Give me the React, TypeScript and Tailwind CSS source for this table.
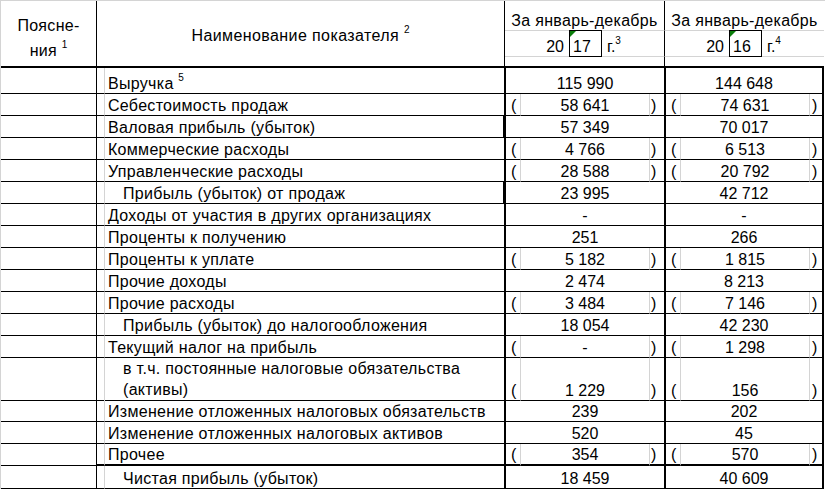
import React from "react";

const COLS = "grid grid-cols-[96px_8px_400px_16px_129px_15px_16px_129px_14px]";

type Row = {
  name: React.ReactNode;
  y17: string;
  y16: string;
  h: string;
  paren?: boolean;
  indent?: boolean;
  total?: boolean;
  thick?: boolean;
  wrap?: boolean;
};

function Sup({ children }: { children: React.ReactNode }) {
  return <sup className="text-[10px] -top-[8px] tracking-normal">{children}</sup>;
}

const rows: Row[] = [
  { name: <>Выручка <Sup>5</Sup></>, y17: "115 990", y16: "144 648", h: "h-[26px]" },
  { name: "Себестоимость продаж", y17: "58 641", y16: "74 631", h: "h-[22px]", paren: true },
  { name: "Валовая прибыль (убыток)", y17: "57 349", y16: "70 017", h: "h-[22px]", total: true },
  { name: "Коммерческие расходы", y17: "4 766", y16: "6 513", h: "h-[22px]", paren: true },
  { name: "Управленческие расходы", y17: "28 588", y16: "20 792", h: "h-[22px]", paren: true },
  { name: "Прибыль (убыток) от продаж", y17: "23 995", y16: "42 712", h: "h-[22px]", indent: true, total: true },
  { name: "Доходы от участия в других организациях", y17: "-", y16: "-", h: "h-[22px]" },
  { name: "Проценты к получению", y17: "251", y16: "266", h: "h-[22px]" },
  { name: "Проценты к уплате", y17: "5 182", y16: "1 815", h: "h-[22px]", paren: true },
  { name: "Прочие доходы", y17: "2 474", y16: "8 213", h: "h-[22px]" },
  { name: "Прочие расходы", y17: "3 484", y16: "7 146", h: "h-[22px]", paren: true },
  { name: "Прибыль (убыток) до налогообложения", y17: "18 054", y16: "42 230", h: "h-[22px]", indent: true },
  { name: "Текущий налог на прибыль", y17: "-", y16: "1 298", h: "h-[22px]", paren: true },
  {
    name: <>в т.ч. постоянные налоговые обязательства<br />(активы)</>,
    y17: "1 229",
    y16: "156",
    h: "h-[42px]",
    paren: true,
    indent: true,
    wrap: true,
  },
  { name: "Изменение отложенных налоговых обязательств", y17: "239", y16: "202", h: "h-[22px]" },
  { name: "Изменение отложенных налоговых активов", y17: "520", y16: "45", h: "h-[22px]" },
  { name: "Прочее", y17: "354", y16: "570", h: "h-[22px]", paren: true, thick: true },
  { name: "Чистая прибыль (убыток)", y17: "18 459", y16: "40 609", h: "h-[23px]", indent: true },
];

const txt = "flex items-end leading-[18px] pb-[0.5px] whitespace-nowrap tracking-normal";

function Values({ v, paren, bb, right }: { v: string; paren?: boolean; bb: string; right?: boolean }) {
  const outer = right ? "border-r-2" : "border-r";
  if (!paren) {
    return <div className={`col-span-3 border-l ${outer} ${bb} ${txt} justify-center`}>{v}</div>;
  }
  return (
    <>
      <div className={`border-l border-r border-r-[#d4d4d4] ${bb} ${txt} pl-[5px]`}>(</div>
      <div className={`border-r border-r-[#d4d4d4] ${bb} ${txt} justify-center`}>{v}</div>
      <div className={`${outer} ${bb} ${txt} ${right ? "pl-[2px]" : "pl-[1px]"}`}>)</div>
    </>
  );
}

function DataRow({ r }: { r: Row }) {
  const bb = r.thick ? "border-b-2" : "border-b";
  return (
    <div className={`${COLS} ${r.h}`}>
      <div className="border-r border-b" />
      <div className={`border-r border-r-[#d4d4d4] ${bb}`} />
      <div
        className={`${r.total ? "border-r-2" : "border-r"} ${bb} flex items-end whitespace-nowrap tracking-[0.3px] ${
          r.wrap ? "leading-[21px] pb-0" : "leading-[18px] pb-[0.5px]"
        } ${r.indent ? "pl-[18px]" : "pl-[3px]"}`}
      >
        <div>{r.name}</div>
      </div>
      <Values v={r.y17} paren={r.paren} bb={bb} />
      <Values v={r.y16} paren={r.paren} bb={bb} right />
    </div>
  );
}

function YearCell({ year, note, last }: { year: string; note: string; last?: boolean }) {
  return (
    <div className={`col-span-3 ${last ? "" : "border-r"} border-b border-b-[#d4d4d4] flex items-stretch leading-[18px]`}>
      <div className="w-[64px] flex items-end justify-end pr-[5px]">20</div>
      <div className="relative w-[33px] h-[27px] -mt-px border flex items-end pl-[3px]">
        <span className="absolute left-0 top-0 w-0 h-0 border-t-[6px] border-r-[6px] border-t-[#0a7d0a] border-r-transparent" />
        {year}
      </div>
      <div className="flex items-end pl-[5px]">
        <span>
          г.<Sup>{note}</Sup>
        </span>
      </div>
    </div>
  );
}

export default function App() {
  return (
    <div className="w-[825px] h-[490px] bg-white text-black overflow-hidden font-['Liberation_Sans',Arial,sans-serif] text-[16px]">
      <div className="border-t border-l border-t-[#d4d4d4] border-l-[#d4d4d4]">
        <div className={`${COLS} grid-rows-[30px_26px_11px]`}>
          <div className="row-span-3 border-r border-b-2 flex flex-col items-center leading-[25px] pt-[12px] tracking-[0.3px]">
            <span>Поясне-</span>
            <span>
              ния <Sup>1</Sup>
            </span>
          </div>
          <div className="col-span-2 row-span-3 border-r border-b-2 flex justify-center leading-[18px] pt-[26px] whitespace-nowrap tracking-[0.4px]">
            <span>
              Наименование показателя <Sup>2</Sup>
            </span>
          </div>
          <div className="col-span-3 border-r border-b border-b-[#d4d4d4] flex items-end justify-center leading-[18px] whitespace-nowrap tracking-[0.3px]">
            За январь-декабрь
          </div>
          <div className="col-span-3 border-b border-b-[#d4d4d4] flex items-end justify-center leading-[18px] whitespace-nowrap tracking-[0.3px]">
            За январь-декабрь
          </div>
          <YearCell year="17" note="3" />
          <YearCell year="16" note="4" last />
          <div className="col-span-3 border-r border-b-2" />
          <div className="col-span-3 border-b-2" />
        </div>
        {rows.map((r, i) => (
          <DataRow key={i} r={r} />
        ))}
      </div>
    </div>
  );
}
